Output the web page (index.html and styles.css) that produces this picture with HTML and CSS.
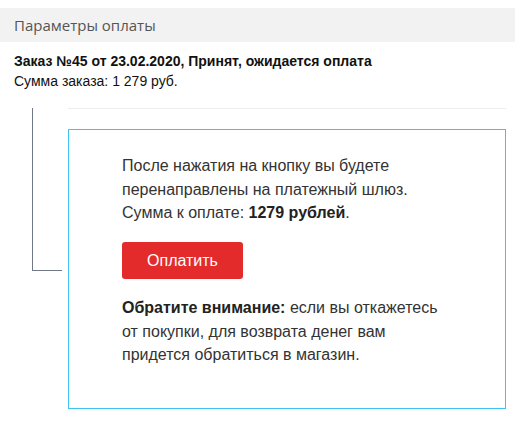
FILE: index.html
```html
<!DOCTYPE html>
<html lang="ru">
<head>
    <meta charset="UTF-8">
    <title>Параметры оплаты</title>
    <link rel="stylesheet" href="styles.css">
</head>
<body>
<div class="page">
    <div class="section-title">Параметры оплаты</div>
    <div class="order">
        <div class="order-status">Заказ №45 от 23.02.2020, Принят, ожидается оплата</div>
        <div class="order-sum">Сумма заказа: 1 279 руб.</div>
    </div>
    <div class="payment">
        <div class="payment-tree"></div>
        <div class="payment-body">
            <div class="payment-box">
                <p class="payment-text">
                    После нажатия на кнопку вы будете<br>
                    перенаправлены на платежный шлюз.<br>
                    Сумма к оплате: <b>1279 рублей</b>.
                </p>
                <button class="btn-pay">Оплатить</button>
                <p class="payment-note">
                    <b>Обратите внимание:</b> если вы откажетесь<br>
                    от покупки, для возврата денег вам<br>
                    придется обратиться в магазин.
                </p>
            </div>
        </div>
    </div>
</div>
</body>
</html>
```

FILE: styles.css
```css
* {
    box-sizing: border-box;
    margin: 0;
    padding: 0;
}

body {
    font-family: 'Liberation Sans', Arial, sans-serif;
    color: #333;
    background-color: #fff;
}

.page {
    padding-top: 8px;
    width: 515px;
}

.section-title {
    height: 34px;
    line-height: 34px;
    padding-left: 14px;
    background-color: #f2f2f2;
    font-family: 'Open Sans', 'Noto Sans', sans-serif;
    font-size: 15px;
    color: #555;
}

.order {
    padding: 9px 14px 0;
    font-size: 14px;
    line-height: 20px;
    color: #111;
}

.order-status {
    font-weight: bold;
}

.payment {
    display: flex;
    margin-top: 17px;
    padding-left: 32px;
}

.payment-tree {
    width: 30px;
    height: 163px;
    border-left: 1px solid #6e7886;
    border-bottom: 1px solid #6e7886;
    margin-right: 6px;
}

.payment-body {
    width: 438px;
    border-top: 1px solid #eee;
    padding-top: 20px;
}

.payment-box {
    border: 1px solid #3cc5f2;
    height: 280px;
    padding: 24px 20px 0 53px;
    font-size: 16px;
    line-height: 23.5px;
}

.payment-text b,
.payment-note b {
    color: #222;
}

.btn-pay {
    display: block;
    width: 121px;
    height: 37px;
    margin: 17.5px 0 17px;
    border: none;
    border-radius: 3px;
    background-color: #e32b2b;
    color: #fff;
    font-family: 'Liberation Sans', Arial, sans-serif;
    font-size: 16px;
}
```
